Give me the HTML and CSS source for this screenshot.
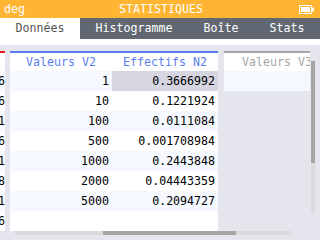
FILE: index.html
```html
<!DOCTYPE html>
<html lang="fr">
  <head>
    <meta charset="UTF-8" />
    <meta name="viewport" content="width=device-width, initial-scale=1.0" />
    <title>Statistiques</title>
    <link rel="stylesheet" href="styles.css">
  </head>
  <body>
    <div class="screen">
      <header class="topbar">
        <span class="mode">deg</span>
        <span class="title">STATISTIQUES</span>
        <svg class="battery" width="15" height="9" viewBox="0 0 15 9">
          <rect x="0.5" y="0.5" width="12" height="8" fill="none" stroke="#fff" />
          <rect x="2" y="2" width="9" height="5" fill="#fff" />
          <rect x="13" y="2.5" width="2" height="4" fill="#fff" />
        </svg>
      </header>

      <nav class="tabs">
        <div class="tab active">Données</div>
        <div class="tab">Histogramme</div>
        <div class="tab">Boîte</div>
        <div class="tab">Stats</div>
      </nav>

      <main class="content">
        <div class="table-view">
          <div class="col col-cut">
            <div class="cell head red"></div>
            <div class="cell"><span>0.0634766</span></div>
            <div class="cell"><span>0.1552776</span></div>
            <div class="cell"><span>0.0273421</span></div>
            <div class="cell"><span>0.1708986</span></div>
            <div class="cell"><span>0.0244381</span></div>
            <div class="cell"><span>0.0444338</span></div>
            <div class="cell"><span>0.2094721</span></div>
            <div class="cell"><span>0.3050596</span></div>
          </div>

          <div class="col col-v2">
            <div class="cell head blue">Valeurs V2</div>
            <div class="cell">1</div>
            <div class="cell">10</div>
            <div class="cell">100</div>
            <div class="cell">500</div>
            <div class="cell">1000</div>
            <div class="cell">2000</div>
            <div class="cell">5000</div>
            <div class="cell"></div>
          </div>

          <div class="col col-n2">
            <div class="cell head blue">Effectifs N2</div>
            <div class="cell selected">0.3666992</div>
            <div class="cell">0.1221924</div>
            <div class="cell">0.0111084</div>
            <div class="cell">0.001708984</div>
            <div class="cell">0.2443848</div>
            <div class="cell">0.04443359</div>
            <div class="cell">0.2094727</div>
            <div class="cell"></div>
          </div>

          <div class="col col-v3">
            <div class="cell head grey">Valeurs V3</div>
            <div class="cell"></div>
          </div>
        </div>

        <div class="vscroll"><div class="thumb"></div></div>
        <div class="hscroll"><div class="thumb"></div></div>
      </main>
    </div>
  </body>
</html>
```

FILE: styles.css
```css
body {
  margin: 0;
  padding: 0;
  font-family: "DejaVu Sans Mono", "Liberation Mono", monospace;
  font-size: 11.6px;
}

.screen {
  width: 320px;
  height: 240px;
  overflow: hidden;
  background-color: #e5e5ee;
}

.topbar {
  height: 18px;
  background-color: #ffb531;
  color: white;
  display: flex;
  align-items: center;
  padding: 0 6px 0 4px;
  line-height: 18px;
}

.mode {
  width: 40px;
}

.title {
  flex: 1;
  text-align: center;
  padding-right: 21px;
}

.battery {
  display: block;
}

.tabs {
  display: flex;
  height: 21px;
  background-color: #616873;
  border-bottom: 6px solid white;
}

.tab {
  flex: 1 1 auto;
  text-align: center;
  line-height: 21px;
  color: white;
  white-space: nowrap;
}

.tab.active {
  background-color: white;
  color: #555;
}

.content {
  position: relative;
  height: 195px;
  padding-top: 6px;
  box-sizing: border-box;
}

.table-view {
  display: flex;
  align-items: flex-start;
  width: 310px;
  height: 180px;
  overflow: hidden;
}

.col {
  flex-shrink: 0;
  display: flex;
  flex-direction: column;
}

.cell {
  height: 20px;
  line-height: 20px;
  text-align: right;
  padding-right: 3px;
  white-space: nowrap;
  color: black;
  background-color: white;
}

.cell:nth-child(even) {
  background-color: #f5f8fe;
}

.cell.head {
  height: 18px;
  line-height: 18px;
  text-align: center;
  padding-right: 0;
  border-top: 2px solid;
  background-color: white;
}

.head.red {
  border-color: #e41e1c;
}

.head.blue {
  border-color: #5b7cf0;
  color: #5b7cf0;
}

.head.grey {
  border-color: #a5a5a5;
  color: #a5a5a5;
}

.cell.selected {
  background-color: #d5d6e2;
}

.col-cut {
  width: 5px;
  margin-right: 5px;
}

.col-cut .cell {
  display: flex;
  justify-content: flex-end;
  overflow: hidden;
  padding-right: 0;
}

.col-v2 {
  width: 102px;
}

.col-n2 {
  width: 106px;
  margin-right: 6px;
}

.col-v3 {
  width: 106px;
}

.vscroll {
  position: absolute;
  left: 311px;
  top: 16px;
  width: 4px;
  height: 151px;
  background-color: #dcd8dc;
}

.vscroll .thumb {
  height: 102px;
  background-color: #a5a5a5;
}

.hscroll {
  position: absolute;
  left: 15px;
  top: 186px;
  width: 277px;
  height: 4px;
  background-color: #dcd8dc;
}

.hscroll .thumb {
  margin-left: 88px;
  width: 133px;
  height: 4px;
  background-color: #a5a5a5;
}
```
